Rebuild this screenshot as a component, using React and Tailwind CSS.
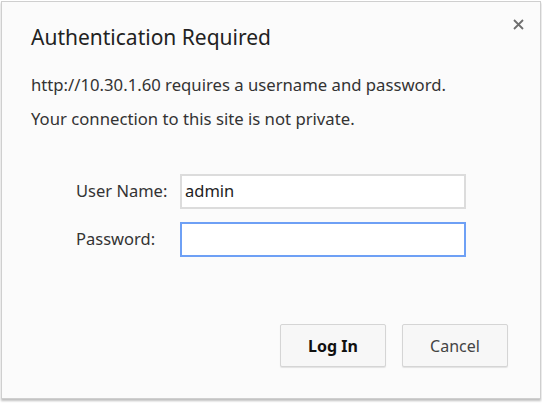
import React from "react";

export default function App() {
  return (
    <div className="w-[542px] h-[403px] bg-white p-px">
      <div
        className="relative w-[540px] h-[398px] bg-[#fbfbfb] border border-[#cfcfcf] shadow-[0_2px_2px_rgba(0,0,0,0.25)] text-[#333333]"
        style={{ fontFamily: '"Noto Sans", "Open Sans", sans-serif' }}
      >
        <button className="absolute right-[14px] top-[14px] w-[16px] h-[16px] flex items-center justify-center text-[#6e6e6e]">
          <svg width="11" height="11" viewBox="0 0 11 11">
            <path d="M1 1L10 10M10 1L1 10" stroke="currentColor" strokeWidth="1.8" />
          </svg>
        </button>
        <div className="pl-[29px] pt-[21px]">
          <h1 className="text-[21px] leading-[28px] text-[#222222]">Authentication Required</h1>
          <p className="mt-[23px] text-[16.7px] leading-[22px]">
            http://10.30.1.60 requires a username and password.
          </p>
          <p className="mt-[12px] text-[16.7px] leading-[22px]">
            Your connection to this site is not private.
          </p>
        </div>
        <div className="mt-[44px] pl-[74px] grid grid-cols-[104px_286px] gap-y-[13px] items-center text-[16.5px]">
          <label>User Name:</label>
          <div className="h-[35px] bg-white border-2 border-[#dcdcdc] px-[3px] flex items-center text-[#222]">admin</div>
          <label>Password:</label>
          <div className="h-[35px] bg-white border-2 border-[#6ea0f5]" />
        </div>
        <div className="absolute right-[32px] bottom-[31px] flex gap-[16px]">
          <button className="w-[106px] h-[43px] bg-[#f7f7f7] border border-[#d5d5d5] rounded-[2px] shadow-[0_1px_1px_rgba(0,0,0,0.1)] text-[16px] font-bold text-[#111]">
            Log In
          </button>
          <button className="w-[106px] h-[43px] bg-[#f7f7f7] border border-[#d5d5d5] rounded-[2px] shadow-[0_1px_1px_rgba(0,0,0,0.1)] text-[16px] text-[#444]">
            Cancel
          </button>
        </div>
      </div>
    </div>
  );
}
